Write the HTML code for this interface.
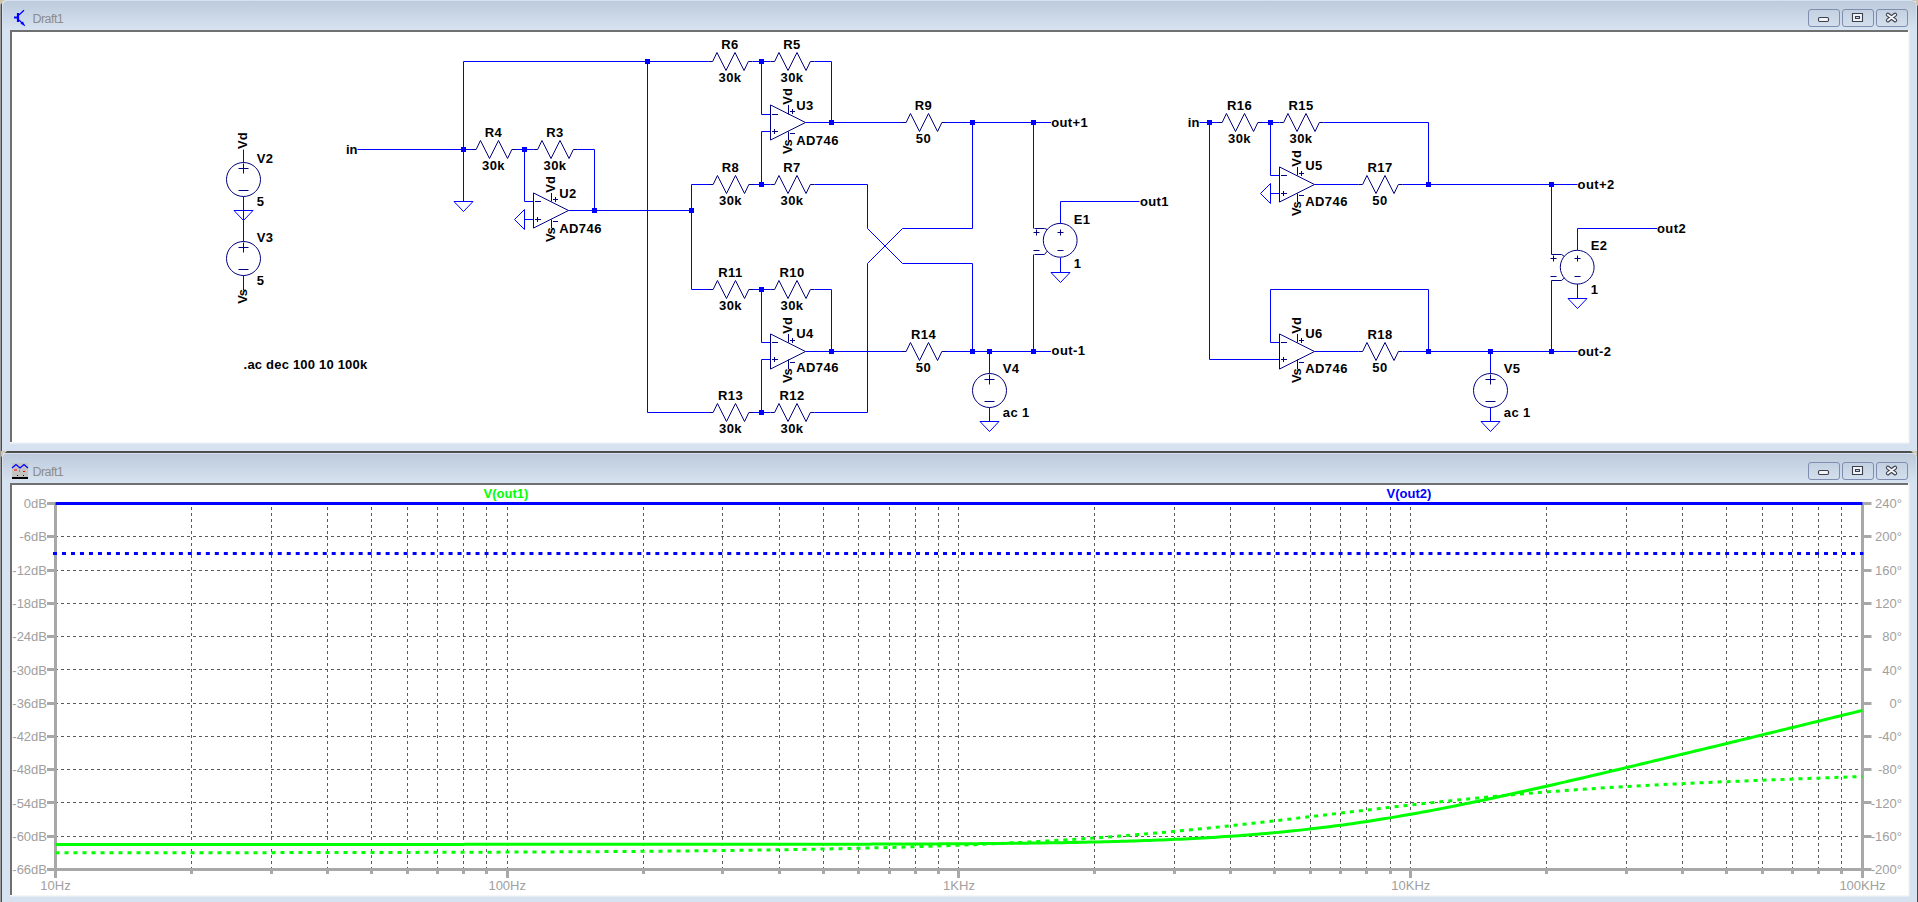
<!DOCTYPE html><html><head><meta charset="utf-8"><style>html,body{margin:0;padding:0;width:1918px;height:902px;overflow:hidden;background:#d6e2f0}svg{display:block}svg text{font-family:"Liberation Sans",sans-serif}</style></head><body><svg width="1918" height="902" viewBox="0 0 1918 902">
<defs><linearGradient id="tg" x1="0" y1="0" x2="0" y2="1"><stop offset="0" stop-color="#bccadb"/><stop offset="1" stop-color="#d7e3f0"/></linearGradient><linearGradient id="bg" x1="0" y1="0" x2="0" y2="1"><stop offset="0" stop-color="#c3d0e0"/><stop offset="1" stop-color="#d3dfec"/></linearGradient></defs>
<rect x="0" y="0" width="1918" height="902" fill="#d6e2f0"/>
<rect x="0" y="0" width="2" height="902" fill="#9c9c9c"/><rect x="1" y="0" width="1.5" height="902" fill="#4a4a4a"/>
<rect x="1917" y="0" width="1" height="902" fill="#4a4a4a"/><rect x="2.5" y="0" width="1" height="902" fill="#eaf0f7"/>
<rect x="0" y="0" width="1918" height="1" fill="#dfe4ee"/>
<rect x="2" y="0" width="1915" height="451" fill="#d6e2f0"/>
<rect x="3" y="1" width="1913" height="29" fill="url(#tg)"/>
<rect x="10" y="30" width="1899" height="2" fill="#707070"/>
<rect x="10" y="30" width="2" height="412" fill="#707070"/>
<rect x="12" y="32" width="1896" height="410" fill="#ffffff"/>
<rect x="10" y="442" width="1899" height="1.5" fill="#f6f6f6"/>
<rect x="1908" y="30" width="1.5" height="413" fill="#f6f6f6"/>
<text x="32.5" y="22.5" font-size="12.5" letter-spacing="-0.55" fill="#8c8c8c">Draft1</text>
<rect x="1808.5" y="9.5" width="31" height="17" rx="2.5" fill="url(#bg)" stroke="#7f8db0" stroke-width="1"/>
<rect x="1842.5" y="9.5" width="31" height="17" rx="2.5" fill="url(#bg)" stroke="#7f8db0" stroke-width="1"/>
<rect x="1876.5" y="9.5" width="31" height="17" rx="2.5" fill="url(#bg)" stroke="#7f8db0" stroke-width="1"/>
<rect x="1818.5" y="17.5" width="10" height="4" rx="1.2" fill="#f4f4f4" stroke="#3b4050" stroke-width="1.1"/>
<path d="M1852.5 13.5 h10 v8 h-10 z M1855.5 16.5 v2 h4 v-2 z" fill="#f4f4f4" fill-rule="evenodd" stroke="#3b4050" stroke-width="1.1"/>
<path d="M1887.9 14.7 L1895.1 20.3 M1895.1 14.7 L1887.9 20.3" stroke="#3b4050" stroke-width="4.2" stroke-linecap="round"/>
<path d="M1887.9 14.7 L1895.1 20.3 M1895.1 14.7 L1887.9 20.3" stroke="#f4f4f4" stroke-width="2" stroke-linecap="round"/>
<rect x="2" y="451" width="1916" height="2" fill="#4d4d4d"/>
<rect x="2" y="453" width="1915" height="449" fill="#d6e2f0"/>
<rect x="3" y="454" width="1913" height="29" fill="url(#tg)"/>
<rect x="10" y="483" width="1899" height="2" fill="#707070"/>
<rect x="10" y="483" width="2" height="412" fill="#707070"/>
<rect x="12" y="485" width="1896" height="410" fill="#ffffff"/>
<rect x="10" y="895" width="1899" height="1.5" fill="#f6f6f6"/>
<rect x="1908" y="483" width="1.5" height="413" fill="#f6f6f6"/>
<text x="32.5" y="475.5" font-size="12.5" letter-spacing="-0.55" fill="#8c8c8c">Draft1</text>
<rect x="1808.5" y="462.5" width="31" height="17" rx="2.5" fill="url(#bg)" stroke="#7f8db0" stroke-width="1"/>
<rect x="1842.5" y="462.5" width="31" height="17" rx="2.5" fill="url(#bg)" stroke="#7f8db0" stroke-width="1"/>
<rect x="1876.5" y="462.5" width="31" height="17" rx="2.5" fill="url(#bg)" stroke="#7f8db0" stroke-width="1"/>
<rect x="1818.5" y="470.5" width="10" height="4" rx="1.2" fill="#f4f4f4" stroke="#3b4050" stroke-width="1.1"/>
<path d="M1852.5 466.5 h10 v8 h-10 z M1855.5 469.5 v2 h4 v-2 z" fill="#f4f4f4" fill-rule="evenodd" stroke="#3b4050" stroke-width="1.1"/>
<path d="M1887.9 467.7 L1895.1 473.3 M1895.1 467.7 L1887.9 473.3" stroke="#3b4050" stroke-width="4.2" stroke-linecap="round"/>
<path d="M1887.9 467.7 L1895.1 473.3 M1895.1 467.7 L1887.9 473.3" stroke="#f4f4f4" stroke-width="2" stroke-linecap="round"/>
<path d="M1 451 H7 L1 457 Z" fill="#cfc6ad"/><path d="M1917 451 H1911 L1917 457 Z" fill="#cfc6ad"/>
<path d="M0 0 H5 L0 5 Z" fill="#cfc6ad"/><path d="M1918 0 H1912 L1918 6 Z" fill="#cfc6ad"/>
<path d="M3 458 Q3 453.5 7.5 453 L3 453 Z" fill="#d6e2f0"/><path d="M1916 458 Q1916 453.5 1911.5 453 L1916 453 Z" fill="#d6e2f0"/>
<path d="M3 6 Q3 1.5 7.5 1 L3 1 Z" fill="#d6e2f0"/><path d="M1916 6 Q1916 1.5 1911.5 1 L1916 1 Z" fill="#d6e2f0"/>
<g stroke="#0000ff" fill="none"><path d="M14 17.5 H18" stroke-width="2"/><path d="M18 13 V22" stroke-width="2.2"/><path d="M19 15 L24 10.2" stroke-width="1.2"/><path d="M19 20 L24.8 25.7" stroke-width="1.2"/><path d="M21 23.6 L23.5 24.5 L22.8 21.8 Z" fill="#0000ff" stroke-width="0.8"/></g>
<rect x="12" y="463" width="16" height="15" fill="#c3c3c3"/><path d="M12 468 L16 464.5 L20 468 L24 464.5 L28 468" stroke="#0000ff" stroke-width="1.2" fill="none"/><rect x="14" y="469.5" width="3" height="1" fill="#ff0000"/><rect x="19" y="470.5" width="1" height="1" fill="#ff0000"/><rect x="23" y="471" width="2" height="1" fill="#ff0000"/><rect x="17" y="475" width="1" height="1" fill="#0000a0"/><rect x="23" y="475" width="1" height="1" fill="#0000a0"/><rect x="12" y="477" width="16" height="2" fill="#000"/>
<g>
<path d="M243.5 149.5 L243.5 162.5" fill="none" stroke="#0000ff" stroke-width="1"/>
<path d="M243.5 196.5 L243.5 241.5" fill="none" stroke="#0000ff" stroke-width="1"/>
<path d="M243.5 275.5 L243.5 290" fill="none" stroke="#0000ff" stroke-width="1"/>
<path d="M234.0 210.5 H253.0 L243.5 220.5 Z" fill="none" stroke="#0000ff" stroke-width="1"/>
<circle cx="243.5" cy="179.5" r="17" fill="none" stroke="#000080" stroke-width="1"/>
<path d="M238.5 168.5 L248.5 168.5" fill="none" stroke="#000080" stroke-width="1"/>
<path d="M243.5 163.5 L243.5 173.5" fill="none" stroke="#000080" stroke-width="1"/>
<path d="M238.5 190.5 L248.5 190.5" fill="none" stroke="#000080" stroke-width="1"/>
<text x="256.8" y="163.1" text-anchor="start" font-size="13" font-weight="bold" fill="#000" letter-spacing="0.4">V2</text>
<text x="256.8" y="205.6" text-anchor="start" font-size="13" font-weight="bold" fill="#000" letter-spacing="0.4">5</text>
<circle cx="243.5" cy="258.5" r="17" fill="none" stroke="#000080" stroke-width="1"/>
<path d="M238.5 247.5 L248.5 247.5" fill="none" stroke="#000080" stroke-width="1"/>
<path d="M243.5 242.5 L243.5 252.5" fill="none" stroke="#000080" stroke-width="1"/>
<path d="M238.5 269.5 L248.5 269.5" fill="none" stroke="#000080" stroke-width="1"/>
<text x="256.8" y="242.0" text-anchor="start" font-size="13" font-weight="bold" fill="#000" letter-spacing="0.4">V3</text>
<text x="256.8" y="284.6" text-anchor="start" font-size="13" font-weight="bold" fill="#000" letter-spacing="0.4">5</text>
<text transform="translate(247.2 149) rotate(-90)" text-anchor="start" font-size="13" font-weight="bold" fill="#000">Vd</text>
<text transform="translate(247.2 290.3) rotate(-90)" text-anchor="end" font-size="13" font-weight="bold" fill="#000" letter-spacing="-1.2">Vs</text>
<text x="243.6" y="368.8" text-anchor="start" font-size="13" font-weight="bold" fill="#000" letter-spacing="0.2">.ac dec 100 10 100k</text>
<text x="357.5" y="153.7" text-anchor="end" font-size="13" font-weight="bold" fill="#000" letter-spacing="0">in</text>
<path d="M357.5 149.5 L472 149.5" fill="none" stroke="#0000ff" stroke-width="1"/>
<path d="M516 149.5 L533.5 149.5" fill="none" stroke="#0000ff" stroke-width="1"/>
<path d="M577.5 149.5 L594.5 149.5 L594.5 210.5" fill="none" stroke="#0000ff" stroke-width="1"/>
<path d="M472 149.5 L476.15 149.5 L480.45 140.5 L489.5 158.5 L498.5 140.5 L507.55 158.5 L511.85 149.5 L516 149.5" fill="none" stroke="#000080" stroke-width="1"/>
<text x="493.5" y="136.8" text-anchor="middle" font-size="13" font-weight="bold" fill="#000" letter-spacing="0.4">R4</text>
<text x="493.5" y="169.5" text-anchor="middle" font-size="13" font-weight="bold" fill="#000" letter-spacing="0.4">30k</text>
<path d="M533.5 149.5 L537.65 149.5 L541.95 140.5 L551.0 158.5 L560.0 140.5 L569.05 158.5 L573.35 149.5 L577.5 149.5" fill="none" stroke="#000080" stroke-width="1"/>
<text x="555.0" y="136.8" text-anchor="middle" font-size="13" font-weight="bold" fill="#000" letter-spacing="0.4">R3</text>
<text x="555.0" y="169.5" text-anchor="middle" font-size="13" font-weight="bold" fill="#000" letter-spacing="0.4">30k</text>
<path d="M463.5 201.5 L463.5 61.5 L708.5 61.5" fill="none" stroke="#0000ff" stroke-width="1"/>
<path d="M454.0 201.5 H473.0 L463.5 211.5 Z" fill="none" stroke="#0000ff" stroke-width="1"/>
<path d="M524.5 149.5 L524.5 201.5 L533.5 201.5" fill="none" stroke="#0000ff" stroke-width="1"/>
<path d="M524.5 219.5 L533.5 219.5" fill="none" stroke="#0000ff" stroke-width="1"/>
<path d="M524.5 209.5 V229.5 L514.5 219.5 Z" fill="none" stroke="#0000ff" stroke-width="1"/>
<path d="M533.5 192.95 L568.5 210.5 L533.5 228.05 L533.5 192.95" fill="none" stroke="#000080" stroke-width="1"/>
<path d="M551.5 192.95 L551.5 201.5" fill="none" stroke="#000080" stroke-width="1"/>
<path d="M551.5 228.05 L551.5 219.5" fill="none" stroke="#000080" stroke-width="1"/>
<path d="M535.0 201.5 L541.0 201.5" fill="none" stroke="#000080" stroke-width="1"/>
<path d="M535.0 219.5 L541.0 219.5" fill="none" stroke="#000080" stroke-width="1"/>
<path d="M537.5 217.0 L537.5 222.0" fill="none" stroke="#000080" stroke-width="1"/>
<path d="M553.0 199.5 L558.0 199.5" fill="none" stroke="#000080" stroke-width="1"/>
<path d="M555.5 197.0 L555.5 202.0" fill="none" stroke="#000080" stroke-width="1"/>
<path d="M553.0 221.5 L558.0 221.5" fill="none" stroke="#000080" stroke-width="1"/>
<text x="559.3" y="197.7" text-anchor="start" font-size="13" font-weight="bold" fill="#000" letter-spacing="0.4">U2</text>
<text x="559.3" y="232.6" text-anchor="start" font-size="13" font-weight="bold" fill="#000" letter-spacing="0.4">AD746</text>
<text transform="translate(555.3 192.64999999999998) rotate(-90)" text-anchor="start" font-size="13" font-weight="bold" fill="#000">Vd</text>
<text transform="translate(555.3 228.55) rotate(-90)" text-anchor="end" font-size="13" font-weight="bold" fill="#000" letter-spacing="-1.2">Vs</text>
<path d="M568.5 210.5 L691.5 210.5" fill="none" stroke="#0000ff" stroke-width="1"/>
<path d="M647.5 61.5 L647.5 412.5 L709 412.5" fill="none" stroke="#0000ff" stroke-width="1"/>
<path d="M708.5 61.5 L712.65 61.5 L716.95 52.5 L726.0 70.5 L735.0 52.5 L744.05 70.5 L748.35 61.5 L752.5 61.5" fill="none" stroke="#000080" stroke-width="1"/>
<text x="730.0" y="48.8" text-anchor="middle" font-size="13" font-weight="bold" fill="#000" letter-spacing="0.4">R6</text>
<text x="730.0" y="81.5" text-anchor="middle" font-size="13" font-weight="bold" fill="#000" letter-spacing="0.4">30k</text>
<path d="M770.5 61.5 L774.65 61.5 L778.95 52.5 L788.0 70.5 L797.0 52.5 L806.05 70.5 L810.35 61.5 L814.5 61.5" fill="none" stroke="#000080" stroke-width="1"/>
<text x="792.0" y="48.8" text-anchor="middle" font-size="13" font-weight="bold" fill="#000" letter-spacing="0.4">R5</text>
<text x="792.0" y="81.5" text-anchor="middle" font-size="13" font-weight="bold" fill="#000" letter-spacing="0.4">30k</text>
<path d="M752.5 61.5 L770.5 61.5" fill="none" stroke="#0000ff" stroke-width="1"/>
<path d="M814.5 61.5 L831.5 61.5 L831.5 122.5" fill="none" stroke="#0000ff" stroke-width="1"/>
<path d="M709 184.5 L691.5 184.5 L691.5 289.5 L709 289.5" fill="none" stroke="#0000ff" stroke-width="1"/>
<path d="M709 184.5 L713.15 184.5 L717.45 175.5 L726.5 193.5 L735.5 175.5 L744.55 193.5 L748.85 184.5 L753 184.5" fill="none" stroke="#000080" stroke-width="1"/>
<text x="730.5" y="171.8" text-anchor="middle" font-size="13" font-weight="bold" fill="#000" letter-spacing="0.4">R8</text>
<text x="730.5" y="204.5" text-anchor="middle" font-size="13" font-weight="bold" fill="#000" letter-spacing="0.4">30k</text>
<path d="M770.5 184.5 L774.65 184.5 L778.95 175.5 L788.0 193.5 L797.0 175.5 L806.05 193.5 L810.35 184.5 L814.5 184.5" fill="none" stroke="#000080" stroke-width="1"/>
<text x="792.0" y="171.8" text-anchor="middle" font-size="13" font-weight="bold" fill="#000" letter-spacing="0.4">R7</text>
<text x="792.0" y="204.5" text-anchor="middle" font-size="13" font-weight="bold" fill="#000" letter-spacing="0.4">30k</text>
<path d="M709 289.5 L713.15 289.5 L717.45 280.5 L726.5 298.5 L735.5 280.5 L744.55 298.5 L748.85 289.5 L753 289.5" fill="none" stroke="#000080" stroke-width="1"/>
<text x="730.5" y="276.8" text-anchor="middle" font-size="13" font-weight="bold" fill="#000" letter-spacing="0.4">R11</text>
<text x="730.5" y="309.5" text-anchor="middle" font-size="13" font-weight="bold" fill="#000" letter-spacing="0.4">30k</text>
<path d="M770.5 289.5 L774.65 289.5 L778.95 280.5 L788.0 298.5 L797.0 280.5 L806.05 298.5 L810.35 289.5 L814.5 289.5" fill="none" stroke="#000080" stroke-width="1"/>
<text x="792.0" y="276.8" text-anchor="middle" font-size="13" font-weight="bold" fill="#000" letter-spacing="0.4">R10</text>
<text x="792.0" y="309.5" text-anchor="middle" font-size="13" font-weight="bold" fill="#000" letter-spacing="0.4">30k</text>
<path d="M709 412.5 L713.15 412.5 L717.45 403.5 L726.5 421.5 L735.5 403.5 L744.55 421.5 L748.85 412.5 L753 412.5" fill="none" stroke="#000080" stroke-width="1"/>
<text x="730.5" y="399.8" text-anchor="middle" font-size="13" font-weight="bold" fill="#000" letter-spacing="0.4">R13</text>
<text x="730.5" y="432.5" text-anchor="middle" font-size="13" font-weight="bold" fill="#000" letter-spacing="0.4">30k</text>
<path d="M770.5 412.5 L774.65 412.5 L778.95 403.5 L788.0 421.5 L797.0 403.5 L806.05 421.5 L810.35 412.5 L814.5 412.5" fill="none" stroke="#000080" stroke-width="1"/>
<text x="792.0" y="399.8" text-anchor="middle" font-size="13" font-weight="bold" fill="#000" letter-spacing="0.4">R12</text>
<text x="792.0" y="432.5" text-anchor="middle" font-size="13" font-weight="bold" fill="#000" letter-spacing="0.4">30k</text>
<path d="M753 184.5 L770.5 184.5" fill="none" stroke="#0000ff" stroke-width="1"/>
<path d="M753 289.5 L770.5 289.5" fill="none" stroke="#0000ff" stroke-width="1"/>
<path d="M753 412.5 L770.5 412.5" fill="none" stroke="#0000ff" stroke-width="1"/>
<path d="M814.5 184.5 L867.5 184.5 L867.5 228.5 L902.5 263.5 L972.5 263.5 L972.5 351.5" fill="none" stroke="#0000ff" stroke-width="1"/>
<path d="M814.5 412.5 L867.5 412.5 L867.5 263.5 L902.5 228.5 L972.5 228.5 L972.5 122.5" fill="none" stroke="#0000ff" stroke-width="1"/>
<path d="M814.5 289.5 L831.5 289.5 L831.5 351.5" fill="none" stroke="#0000ff" stroke-width="1"/>
<path d="M761.5 61.5 L761.5 114.5 L770.5 114.5" fill="none" stroke="#0000ff" stroke-width="1"/>
<path d="M761.5 184.5 L761.5 131.5 L770.5 131.5" fill="none" stroke="#0000ff" stroke-width="1"/>
<path d="M761.5 289.5 L761.5 342.5 L770.5 342.5" fill="none" stroke="#0000ff" stroke-width="1"/>
<path d="M761.5 412.5 L761.5 359.5 L770.5 359.5" fill="none" stroke="#0000ff" stroke-width="1"/>
<path d="M770.5 104.95 L805.5 122.5 L770.5 140.05 L770.5 104.95" fill="none" stroke="#000080" stroke-width="1"/>
<path d="M788.5 104.95 L788.5 114.5" fill="none" stroke="#000080" stroke-width="1"/>
<path d="M788.5 140.05 L788.5 131.5" fill="none" stroke="#000080" stroke-width="1"/>
<path d="M772.0 114.5 L778.0 114.5" fill="none" stroke="#000080" stroke-width="1"/>
<path d="M772.0 131.5 L778.0 131.5" fill="none" stroke="#000080" stroke-width="1"/>
<path d="M774.5 129.0 L774.5 134.0" fill="none" stroke="#000080" stroke-width="1"/>
<path d="M790.0 111.5 L795.0 111.5" fill="none" stroke="#000080" stroke-width="1"/>
<path d="M792.5 109.0 L792.5 114.0" fill="none" stroke="#000080" stroke-width="1"/>
<path d="M790.0 133.5 L795.0 133.5" fill="none" stroke="#000080" stroke-width="1"/>
<text x="796.3" y="109.8" text-anchor="start" font-size="13" font-weight="bold" fill="#000" letter-spacing="0.4">U3</text>
<text x="796.3" y="144.7" text-anchor="start" font-size="13" font-weight="bold" fill="#000" letter-spacing="0.4">AD746</text>
<text transform="translate(792.3 104.65) rotate(-90)" text-anchor="start" font-size="13" font-weight="bold" fill="#000">Vd</text>
<text transform="translate(792.3 140.55) rotate(-90)" text-anchor="end" font-size="13" font-weight="bold" fill="#000" letter-spacing="-1.2">Vs</text>
<path d="M770.5 333.95 L805.5 351.5 L770.5 369.05 L770.5 333.95" fill="none" stroke="#000080" stroke-width="1"/>
<path d="M788.5 333.95 L788.5 342.5" fill="none" stroke="#000080" stroke-width="1"/>
<path d="M788.5 369.05 L788.5 359.5" fill="none" stroke="#000080" stroke-width="1"/>
<path d="M772.0 342.5 L778.0 342.5" fill="none" stroke="#000080" stroke-width="1"/>
<path d="M772.0 359.5 L778.0 359.5" fill="none" stroke="#000080" stroke-width="1"/>
<path d="M774.5 357.0 L774.5 362.0" fill="none" stroke="#000080" stroke-width="1"/>
<path d="M790.0 340.5 L795.0 340.5" fill="none" stroke="#000080" stroke-width="1"/>
<path d="M792.5 338.0 L792.5 343.0" fill="none" stroke="#000080" stroke-width="1"/>
<path d="M790.0 362.5 L795.0 362.5" fill="none" stroke="#000080" stroke-width="1"/>
<text x="796.3" y="337.5" text-anchor="start" font-size="13" font-weight="bold" fill="#000" letter-spacing="0.4">U4</text>
<text x="796.3" y="372.3" text-anchor="start" font-size="13" font-weight="bold" fill="#000" letter-spacing="0.4">AD746</text>
<text transform="translate(792.3 333.65) rotate(-90)" text-anchor="start" font-size="13" font-weight="bold" fill="#000">Vd</text>
<text transform="translate(792.3 369.55) rotate(-90)" text-anchor="end" font-size="13" font-weight="bold" fill="#000" letter-spacing="-1.2">Vs</text>
<path d="M805.5 122.5 L902 122.5" fill="none" stroke="#0000ff" stroke-width="1"/>
<path d="M946 122.5 L1051 122.5" fill="none" stroke="#0000ff" stroke-width="1"/>
<path d="M805.5 351.5 L902 351.5" fill="none" stroke="#0000ff" stroke-width="1"/>
<path d="M946 351.5 L1051 351.5" fill="none" stroke="#0000ff" stroke-width="1"/>
<path d="M902 122.5 L906.15 122.5 L910.45 113.5 L919.5 131.5 L928.5 113.5 L937.55 131.5 L941.85 122.5 L946 122.5" fill="none" stroke="#000080" stroke-width="1"/>
<text x="923.5" y="109.8" text-anchor="middle" font-size="13" font-weight="bold" fill="#000" letter-spacing="0.4">R9</text>
<text x="923.5" y="142.5" text-anchor="middle" font-size="13" font-weight="bold" fill="#000" letter-spacing="0.4">50</text>
<path d="M902 351.5 L906.15 351.5 L910.45 342.5 L919.5 360.5 L928.5 342.5 L937.55 360.5 L941.85 351.5 L946 351.5" fill="none" stroke="#000080" stroke-width="1"/>
<text x="923.5" y="338.8" text-anchor="middle" font-size="13" font-weight="bold" fill="#000" letter-spacing="0.4">R14</text>
<text x="923.5" y="371.5" text-anchor="middle" font-size="13" font-weight="bold" fill="#000" letter-spacing="0.4">50</text>
<path d="M1033.5 122.5 L1033.5 228.5" fill="none" stroke="#0000ff" stroke-width="1"/>
<path d="M1033.5 351.5 L1033.5 254.5" fill="none" stroke="#0000ff" stroke-width="1"/>
<circle cx="1060.2" cy="240.3" r="16.9" fill="none" stroke="#000080" stroke-width="1"/>
<path d="M1034.5 228.5 L1044.5 228.5 L1047.3 229.5" fill="none" stroke="#000080" stroke-width="1"/>
<path d="M1034.5 254.5 L1044.5 254.5 L1047.3 251.10000000000002" fill="none" stroke="#000080" stroke-width="1"/>
<path d="M1033.5 232.5 L1039.5 232.5" fill="none" stroke="#000080" stroke-width="1"/>
<path d="M1036.5 229.5 L1036.5 235.5" fill="none" stroke="#000080" stroke-width="1"/>
<path d="M1033.5 250.5 L1039.5 250.5" fill="none" stroke="#000080" stroke-width="1"/>
<path d="M1057.5 232.5 L1063.5 232.5" fill="none" stroke="#000080" stroke-width="1"/>
<path d="M1060.5 229.5 L1060.5 235.5" fill="none" stroke="#000080" stroke-width="1"/>
<path d="M1057.5 250.5 L1063.5 250.5" fill="none" stroke="#000080" stroke-width="1"/>
<text x="1073.7" y="224.0" text-anchor="start" font-size="13" font-weight="bold" fill="#000" letter-spacing="0.4">E1</text>
<text x="1073.7" y="267.5" text-anchor="start" font-size="13" font-weight="bold" fill="#000" letter-spacing="0.4">1</text>
<path d="M1060.5 223.5 L1060.5 201.5 L1139.5 201.5" fill="none" stroke="#0000ff" stroke-width="1"/>
<path d="M1060.5 257.5 L1060.5 272.5" fill="none" stroke="#0000ff" stroke-width="1"/>
<path d="M1051.0 272.5 H1070.0 L1060.5 282.5 Z" fill="none" stroke="#0000ff" stroke-width="1"/>
<text x="1051.2" y="126.6" text-anchor="start" font-size="13" font-weight="bold" fill="#000" letter-spacing="0.4">out+1</text>
<text x="1051.6" y="355.4" text-anchor="start" font-size="13" font-weight="bold" fill="#000" letter-spacing="0.4">out-1</text>
<text x="1139.9" y="205.8" text-anchor="start" font-size="13" font-weight="bold" fill="#000" letter-spacing="0.4">out1</text>
<path d="M989.5 351.5 L989.5 373.5" fill="none" stroke="#0000ff" stroke-width="1"/>
<path d="M989.5 407.5 L989.5 421.5" fill="none" stroke="#0000ff" stroke-width="1"/>
<path d="M980.0 421.5 H999.0 L989.5 431.5 Z" fill="none" stroke="#0000ff" stroke-width="1"/>
<circle cx="989.5" cy="390.5" r="17" fill="none" stroke="#000080" stroke-width="1"/>
<path d="M984.5 379.5 L994.5 379.5" fill="none" stroke="#000080" stroke-width="1"/>
<path d="M989.5 374.5 L989.5 384.5" fill="none" stroke="#000080" stroke-width="1"/>
<path d="M984.5 401.5 L994.5 401.5" fill="none" stroke="#000080" stroke-width="1"/>
<text x="1002.8" y="372.7" text-anchor="start" font-size="13" font-weight="bold" fill="#000" letter-spacing="0.4">V4</text>
<text x="1002.8" y="416.6" text-anchor="start" font-size="13" font-weight="bold" fill="#000" letter-spacing="0.4">ac 1</text>
<rect x="461.0" y="147.0" width="5" height="5" fill="#0000ff"/>
<rect x="522.0" y="147.0" width="5" height="5" fill="#0000ff"/>
<rect x="592.0" y="208.0" width="5" height="5" fill="#0000ff"/>
<rect x="645.0" y="59.0" width="5" height="5" fill="#0000ff"/>
<rect x="689.0" y="208.0" width="5" height="5" fill="#0000ff"/>
<rect x="759.0" y="59.0" width="5" height="5" fill="#0000ff"/>
<rect x="829.0" y="120.0" width="5" height="5" fill="#0000ff"/>
<rect x="759.0" y="182.0" width="5" height="5" fill="#0000ff"/>
<rect x="759.0" y="287.0" width="5" height="5" fill="#0000ff"/>
<rect x="759.0" y="410.0" width="5" height="5" fill="#0000ff"/>
<rect x="829.0" y="349.0" width="5" height="5" fill="#0000ff"/>
<rect x="970.0" y="120.0" width="5" height="5" fill="#0000ff"/>
<rect x="1031.0" y="120.0" width="5" height="5" fill="#0000ff"/>
<rect x="970.0" y="349.0" width="5" height="5" fill="#0000ff"/>
<rect x="987.0" y="349.0" width="5" height="5" fill="#0000ff"/>
<rect x="1031.0" y="349.0" width="5" height="5" fill="#0000ff"/>
<text x="1199.4" y="126.5" text-anchor="end" font-size="13" font-weight="bold" fill="#000" letter-spacing="0">in</text>
<path d="M1199.5 122.5 L1218 122.5" fill="none" stroke="#0000ff" stroke-width="1"/>
<path d="M1209.5 122.5 L1209.5 359.5 L1279.5 359.5" fill="none" stroke="#0000ff" stroke-width="1"/>
<path d="M1218 122.5 L1222.15 122.5 L1226.45 113.5 L1235.5 131.5 L1244.5 113.5 L1253.55 131.5 L1257.85 122.5 L1262 122.5" fill="none" stroke="#000080" stroke-width="1"/>
<text x="1239.5" y="109.8" text-anchor="middle" font-size="13" font-weight="bold" fill="#000" letter-spacing="0.4">R16</text>
<text x="1239.5" y="142.5" text-anchor="middle" font-size="13" font-weight="bold" fill="#000" letter-spacing="0.4">30k</text>
<path d="M1279.5 122.5 L1283.65 122.5 L1287.95 113.5 L1297.0 131.5 L1306.0 113.5 L1315.05 131.5 L1319.35 122.5 L1323.5 122.5" fill="none" stroke="#000080" stroke-width="1"/>
<text x="1301.0" y="109.8" text-anchor="middle" font-size="13" font-weight="bold" fill="#000" letter-spacing="0.4">R15</text>
<text x="1301.0" y="142.5" text-anchor="middle" font-size="13" font-weight="bold" fill="#000" letter-spacing="0.4">30k</text>
<path d="M1262 122.5 L1279.5 122.5" fill="none" stroke="#0000ff" stroke-width="1"/>
<path d="M1323.5 122.5 L1428.5 122.5 L1428.5 184.5" fill="none" stroke="#0000ff" stroke-width="1"/>
<path d="M1270.5 122.5 L1270.5 175.5 L1279.5 175.5" fill="none" stroke="#0000ff" stroke-width="1"/>
<path d="M1270.5 193.5 L1279.5 193.5" fill="none" stroke="#0000ff" stroke-width="1"/>
<path d="M1270.5 183.5 V203.5 L1260.5 193.5 Z" fill="none" stroke="#0000ff" stroke-width="1"/>
<path d="M1279.5 166.95 L1314.5 184.5 L1279.5 202.05 L1279.5 166.95" fill="none" stroke="#000080" stroke-width="1"/>
<path d="M1297.5 166.95 L1297.5 175.5" fill="none" stroke="#000080" stroke-width="1"/>
<path d="M1297.5 202.05 L1297.5 193.5" fill="none" stroke="#000080" stroke-width="1"/>
<path d="M1281.0 175.5 L1287.0 175.5" fill="none" stroke="#000080" stroke-width="1"/>
<path d="M1281.0 193.5 L1287.0 193.5" fill="none" stroke="#000080" stroke-width="1"/>
<path d="M1283.5 191.0 L1283.5 196.0" fill="none" stroke="#000080" stroke-width="1"/>
<path d="M1299.0 173.5 L1304.0 173.5" fill="none" stroke="#000080" stroke-width="1"/>
<path d="M1301.5 171.0 L1301.5 176.0" fill="none" stroke="#000080" stroke-width="1"/>
<path d="M1299.0 195.5 L1304.0 195.5" fill="none" stroke="#000080" stroke-width="1"/>
<text x="1305.3" y="170.4" text-anchor="start" font-size="13" font-weight="bold" fill="#000" letter-spacing="0.4">U5</text>
<text x="1305.3" y="205.6" text-anchor="start" font-size="13" font-weight="bold" fill="#000" letter-spacing="0.4">AD746</text>
<text transform="translate(1301.3 166.64999999999998) rotate(-90)" text-anchor="start" font-size="13" font-weight="bold" fill="#000">Vd</text>
<text transform="translate(1301.3 202.55) rotate(-90)" text-anchor="end" font-size="13" font-weight="bold" fill="#000" letter-spacing="-1.2">Vs</text>
<path d="M1279.5 333.95 L1314.5 351.5 L1279.5 369.05 L1279.5 333.95" fill="none" stroke="#000080" stroke-width="1"/>
<path d="M1297.5 333.95 L1297.5 342.5" fill="none" stroke="#000080" stroke-width="1"/>
<path d="M1297.5 369.05 L1297.5 359.5" fill="none" stroke="#000080" stroke-width="1"/>
<path d="M1281.0 342.5 L1287.0 342.5" fill="none" stroke="#000080" stroke-width="1"/>
<path d="M1281.0 359.5 L1287.0 359.5" fill="none" stroke="#000080" stroke-width="1"/>
<path d="M1283.5 357.0 L1283.5 362.0" fill="none" stroke="#000080" stroke-width="1"/>
<path d="M1299.0 340.5 L1304.0 340.5" fill="none" stroke="#000080" stroke-width="1"/>
<path d="M1301.5 338.0 L1301.5 343.0" fill="none" stroke="#000080" stroke-width="1"/>
<path d="M1299.0 362.5 L1304.0 362.5" fill="none" stroke="#000080" stroke-width="1"/>
<text x="1305.3" y="337.6" text-anchor="start" font-size="13" font-weight="bold" fill="#000" letter-spacing="0.4">U6</text>
<text x="1305.3" y="372.6" text-anchor="start" font-size="13" font-weight="bold" fill="#000" letter-spacing="0.4">AD746</text>
<text transform="translate(1301.3 333.65) rotate(-90)" text-anchor="start" font-size="13" font-weight="bold" fill="#000">Vd</text>
<text transform="translate(1301.3 369.55) rotate(-90)" text-anchor="end" font-size="13" font-weight="bold" fill="#000" letter-spacing="-1.2">Vs</text>
<path d="M1314.5 184.5 L1358.5 184.5" fill="none" stroke="#0000ff" stroke-width="1"/>
<path d="M1402.5 184.5 L1577.5 184.5" fill="none" stroke="#0000ff" stroke-width="1"/>
<path d="M1358.5 184.5 L1362.65 184.5 L1366.95 175.5 L1376.0 193.5 L1385.0 175.5 L1394.05 193.5 L1398.35 184.5 L1402.5 184.5" fill="none" stroke="#000080" stroke-width="1"/>
<text x="1380.0" y="171.8" text-anchor="middle" font-size="13" font-weight="bold" fill="#000" letter-spacing="0.4">R17</text>
<text x="1380.0" y="204.5" text-anchor="middle" font-size="13" font-weight="bold" fill="#000" letter-spacing="0.4">50</text>
<path d="M1358.5 351.5 L1362.65 351.5 L1366.95 342.5 L1376.0 360.5 L1385.0 342.5 L1394.05 360.5 L1398.35 351.5 L1402.5 351.5" fill="none" stroke="#000080" stroke-width="1"/>
<text x="1380.0" y="338.8" text-anchor="middle" font-size="13" font-weight="bold" fill="#000" letter-spacing="0.4">R18</text>
<text x="1380.0" y="371.5" text-anchor="middle" font-size="13" font-weight="bold" fill="#000" letter-spacing="0.4">50</text>
<path d="M1279.5 342.5 L1270.5 342.5 L1270.5 289.5 L1428.5 289.5 L1428.5 351.5" fill="none" stroke="#0000ff" stroke-width="1"/>
<path d="M1314.5 351.5 L1358.5 351.5" fill="none" stroke="#0000ff" stroke-width="1"/>
<path d="M1402.5 351.5 L1577.5 351.5" fill="none" stroke="#0000ff" stroke-width="1"/>
<path d="M1551.5 184.5 L1551.5 254.5" fill="none" stroke="#0000ff" stroke-width="1"/>
<path d="M1551.5 351.5 L1551.5 280.5" fill="none" stroke="#0000ff" stroke-width="1"/>
<circle cx="1577.2" cy="267.2" r="16.9" fill="none" stroke="#000080" stroke-width="1"/>
<path d="M1551.5 254.5 L1561.5 254.5 L1564.3 256.4" fill="none" stroke="#000080" stroke-width="1"/>
<path d="M1551.5 280.5 L1561.5 280.5 L1564.3 278.0" fill="none" stroke="#000080" stroke-width="1"/>
<path d="M1550.5 258.5 L1556.5 258.5" fill="none" stroke="#000080" stroke-width="1"/>
<path d="M1553.5 255.5 L1553.5 261.5" fill="none" stroke="#000080" stroke-width="1"/>
<path d="M1550.5 276.5 L1556.5 276.5" fill="none" stroke="#000080" stroke-width="1"/>
<path d="M1574.5 258.5 L1580.5 258.5" fill="none" stroke="#000080" stroke-width="1"/>
<path d="M1577.5 255.5 L1577.5 261.5" fill="none" stroke="#000080" stroke-width="1"/>
<path d="M1574.5 276.5 L1580.5 276.5" fill="none" stroke="#000080" stroke-width="1"/>
<text x="1590.7" y="250.0" text-anchor="start" font-size="13" font-weight="bold" fill="#000" letter-spacing="0.4">E2</text>
<text x="1590.7" y="293.5" text-anchor="start" font-size="13" font-weight="bold" fill="#000" letter-spacing="0.4">1</text>
<path d="M1577.5 250 L1577.5 228.5 L1657 228.5" fill="none" stroke="#0000ff" stroke-width="1"/>
<path d="M1577.5 284 L1577.5 298.5" fill="none" stroke="#0000ff" stroke-width="1"/>
<path d="M1568.0 298.5 H1587.0 L1577.5 308.5 Z" fill="none" stroke="#0000ff" stroke-width="1"/>
<path d="M1490.5 351.5 L1490.5 373.5" fill="none" stroke="#0000ff" stroke-width="1"/>
<path d="M1490.5 407.5 L1490.5 421.5" fill="none" stroke="#0000ff" stroke-width="1"/>
<path d="M1481.0 421.5 H1500.0 L1490.5 431.5 Z" fill="none" stroke="#0000ff" stroke-width="1"/>
<circle cx="1490.5" cy="390.5" r="17" fill="none" stroke="#000080" stroke-width="1"/>
<path d="M1485.5 379.5 L1495.5 379.5" fill="none" stroke="#000080" stroke-width="1"/>
<path d="M1490.5 374.5 L1490.5 384.5" fill="none" stroke="#000080" stroke-width="1"/>
<path d="M1485.5 401.5 L1495.5 401.5" fill="none" stroke="#000080" stroke-width="1"/>
<text x="1503.8" y="372.7" text-anchor="start" font-size="13" font-weight="bold" fill="#000" letter-spacing="0.4">V5</text>
<text x="1503.8" y="416.6" text-anchor="start" font-size="13" font-weight="bold" fill="#000" letter-spacing="0.4">ac 1</text>
<text x="1577.6" y="188.5" text-anchor="start" font-size="13" font-weight="bold" fill="#000" letter-spacing="0.4">out+2</text>
<text x="1577.7" y="355.7" text-anchor="start" font-size="13" font-weight="bold" fill="#000" letter-spacing="0.4">out-2</text>
<text x="1657" y="232.9" text-anchor="start" font-size="13" font-weight="bold" fill="#000" letter-spacing="0.4">out2</text>
<rect x="1207.0" y="120.0" width="5" height="5" fill="#0000ff"/>
<rect x="1268.0" y="120.0" width="5" height="5" fill="#0000ff"/>
<rect x="1426.0" y="182.0" width="5" height="5" fill="#0000ff"/>
<rect x="1549.0" y="182.0" width="5" height="5" fill="#0000ff"/>
<rect x="1426.0" y="349.0" width="5" height="5" fill="#0000ff"/>
<rect x="1488.0" y="349.0" width="5" height="5" fill="#0000ff"/>
<rect x="1549.0" y="349.0" width="5" height="5" fill="#0000ff"/>
</g>
<g>
<path d="M191.5 507 V868.0 M271.5 507 V868.0 M327.5 507 V868.0 M371.5 507 V868.0 M407.5 507 V868.0 M437.5 507 V868.0 M463.5 507 V868.0 M486.5 507 V868.0 M507.5 507 V868.0 M643.5 507 V868.0 M722.5 507 V868.0 M779.5 507 V868.0 M823.5 507 V868.0 M858.5 507 V868.0 M889.5 507 V868.0 M915.5 507 V868.0 M938.5 507 V868.0 M958.5 507 V868.0 M1094.5 507 V868.0 M1174.5 507 V868.0 M1230.5 507 V868.0 M1274.5 507 V868.0 M1310.5 507 V868.0 M1340.5 507 V868.0 M1366.5 507 V868.0 M1390.5 507 V868.0 M1410.5 507 V868.0 M1546.5 507 V868.0 M1626.5 507 V868.0 M1682.5 507 V868.0 M1726.5 507 V868.0 M1762.5 507 V868.0 M1792.5 507 V868.0 M1818.5 507 V868.0 M1841.5 507 V868.0 M55 536.5 H1861.0 M55 570.5 H1861.0 M55 603.5 H1861.0 M55 636.5 H1861.0 M55 669.5 H1861.0 M55 703.5 H1861.0 M55 736.5 H1861.0 M55 769.5 H1861.0 M55 802.5 H1861.0 M55 836.5 H1861.0" stroke="#5a5a5a" stroke-width="1" stroke-dasharray="3 3" fill="none"/>
<path d="M55.5 503.5 V869.5 H1862.5 V503.5" stroke="#a8a8a8" stroke-width="3" fill="none"/>
<path d="M47 503.5 H55.5 M1862.5 503.5 H1871.5 M47 536.5 H55.5 M1862.5 536.5 H1871.5 M47 570.5 H55.5 M1862.5 570.5 H1871.5 M47 603.5 H55.5 M1862.5 603.5 H1871.5 M47 636.5 H55.5 M1862.5 636.5 H1871.5 M47 669.5 H55.5 M1862.5 669.5 H1871.5 M47 703.5 H55.5 M1862.5 703.5 H1871.5 M47 736.5 H55.5 M1862.5 736.5 H1871.5 M47 769.5 H55.5 M1862.5 769.5 H1871.5 M47 802.5 H55.5 M1862.5 802.5 H1871.5 M47 836.5 H55.5 M1862.5 836.5 H1871.5 M47 869.5 H55.5 M1862.5 869.5 H1871.5 M55.5 869.5 V878 M191.5 869.5 V874 M271.5 869.5 V874 M327.5 869.5 V874 M371.5 869.5 V874 M407.5 869.5 V874 M437.5 869.5 V874 M463.5 869.5 V874 M486.5 869.5 V874 M507.5 869.5 V878 M643.5 869.5 V874 M722.5 869.5 V874 M779.5 869.5 V874 M823.5 869.5 V874 M858.5 869.5 V874 M889.5 869.5 V874 M915.5 869.5 V874 M938.5 869.5 V874 M958.5 869.5 V878 M1094.5 869.5 V874 M1174.5 869.5 V874 M1230.5 869.5 V874 M1274.5 869.5 V874 M1310.5 869.5 V874 M1340.5 869.5 V874 M1366.5 869.5 V874 M1390.5 869.5 V874 M1410.5 869.5 V878 M1546.5 869.5 V874 M1626.5 869.5 V874 M1682.5 869.5 V874 M1726.5 869.5 V874 M1762.5 869.5 V874 M1792.5 869.5 V874 M1818.5 869.5 V874 M1841.5 869.5 V874 M1862.5 869.5 V878" stroke="#a8a8a8" stroke-width="3" fill="none"/>
<text x="47" y="508.1" text-anchor="end" font-size="13" font-weight="normal" fill="#a0a0a0" >0dB</text>
<text x="1902" y="508.1" text-anchor="end" font-size="13" font-weight="normal" fill="#a0a0a0" >240°</text>
<text x="47" y="541.4" text-anchor="end" font-size="13" font-weight="normal" fill="#a0a0a0" >-6dB</text>
<text x="1902" y="541.4" text-anchor="end" font-size="13" font-weight="normal" fill="#a0a0a0" >200°</text>
<text x="47" y="574.6" text-anchor="end" font-size="13" font-weight="normal" fill="#a0a0a0" >-12dB</text>
<text x="1902" y="574.6" text-anchor="end" font-size="13" font-weight="normal" fill="#a0a0a0" >160°</text>
<text x="47" y="607.9" text-anchor="end" font-size="13" font-weight="normal" fill="#a0a0a0" >-18dB</text>
<text x="1902" y="607.9" text-anchor="end" font-size="13" font-weight="normal" fill="#a0a0a0" >120°</text>
<text x="47" y="641.2" text-anchor="end" font-size="13" font-weight="normal" fill="#a0a0a0" >-24dB</text>
<text x="1902" y="641.2" text-anchor="end" font-size="13" font-weight="normal" fill="#a0a0a0" >80°</text>
<text x="47" y="674.5" text-anchor="end" font-size="13" font-weight="normal" fill="#a0a0a0" >-30dB</text>
<text x="1902" y="674.5" text-anchor="end" font-size="13" font-weight="normal" fill="#a0a0a0" >40°</text>
<text x="47" y="707.7" text-anchor="end" font-size="13" font-weight="normal" fill="#a0a0a0" >-36dB</text>
<text x="1902" y="707.7" text-anchor="end" font-size="13" font-weight="normal" fill="#a0a0a0" >0°</text>
<text x="47" y="741.0" text-anchor="end" font-size="13" font-weight="normal" fill="#a0a0a0" >-42dB</text>
<text x="1902" y="741.0" text-anchor="end" font-size="13" font-weight="normal" fill="#a0a0a0" >-40°</text>
<text x="47" y="774.3" text-anchor="end" font-size="13" font-weight="normal" fill="#a0a0a0" >-48dB</text>
<text x="1902" y="774.3" text-anchor="end" font-size="13" font-weight="normal" fill="#a0a0a0" >-80°</text>
<text x="47" y="807.6" text-anchor="end" font-size="13" font-weight="normal" fill="#a0a0a0" >-54dB</text>
<text x="1902" y="807.6" text-anchor="end" font-size="13" font-weight="normal" fill="#a0a0a0" >-120°</text>
<text x="47" y="840.8" text-anchor="end" font-size="13" font-weight="normal" fill="#a0a0a0" >-60dB</text>
<text x="1902" y="840.8" text-anchor="end" font-size="13" font-weight="normal" fill="#a0a0a0" >-160°</text>
<text x="47" y="874.1" text-anchor="end" font-size="13" font-weight="normal" fill="#a0a0a0" >-66dB</text>
<text x="1902" y="874.1" text-anchor="end" font-size="13" font-weight="normal" fill="#a0a0a0" >-200°</text>
<text x="55.5" y="890" text-anchor="middle" font-size="13" font-weight="normal" fill="#a0a0a0" >10Hz</text>
<text x="507.2" y="890" text-anchor="middle" font-size="13" font-weight="normal" fill="#a0a0a0" >100Hz</text>
<text x="959.0" y="890" text-anchor="middle" font-size="13" font-weight="normal" fill="#a0a0a0" >1KHz</text>
<text x="1410.8" y="890" text-anchor="middle" font-size="13" font-weight="normal" fill="#a0a0a0" >10KHz</text>
<text x="1862.5" y="890" text-anchor="middle" font-size="13" font-weight="normal" fill="#a0a0a0" >100KHz</text>
<path d="M55.5 503.5 H1862.5" stroke="#0000ff" stroke-width="3" fill="none"/>
<path d="M53 553.5 H1863.5" stroke="#0000ff" stroke-width="3" stroke-dasharray="4 4.99" fill="none"/>
<path d="M55.5 844.38 L60.02 844.38 L64.54 844.38 L69.05 844.38 L73.57 844.38 L78.09 844.38 L82.61 844.38 L87.12 844.38 L91.64 844.38 L96.16 844.38 L100.68 844.38 L105.19 844.38 L109.71 844.38 L114.23 844.38 L118.75 844.38 L123.26 844.38 L127.78 844.38 L132.3 844.38 L136.81 844.38 L141.33 844.38 L145.85 844.38 L150.37 844.38 L154.88 844.38 L159.4 844.38 L163.92 844.38 L168.44 844.38 L172.95 844.38 L177.47 844.38 L181.99 844.38 L186.51 844.38 L191.03 844.38 L195.54 844.38 L200.06 844.38 L204.58 844.38 L209.1 844.38 L213.61 844.38 L218.13 844.38 L222.65 844.38 L227.16 844.38 L231.68 844.38 L236.2 844.38 L240.72 844.38 L245.23 844.38 L249.75 844.38 L254.27 844.38 L258.79 844.38 L263.3 844.38 L267.82 844.38 L272.34 844.38 L276.86 844.38 L281.38 844.38 L285.89 844.38 L290.41 844.38 L294.93 844.38 L299.45 844.38 L303.96 844.38 L308.48 844.38 L313.0 844.38 L317.52 844.38 L322.03 844.38 L326.55 844.38 L331.07 844.38 L335.59 844.38 L340.1 844.38 L344.62 844.38 L349.14 844.38 L353.66 844.38 L358.17 844.38 L362.69 844.38 L367.21 844.38 L371.72 844.38 L376.24 844.38 L380.76 844.38 L385.28 844.38 L389.8 844.38 L394.31 844.38 L398.83 844.38 L403.35 844.38 L407.87 844.38 L412.38 844.38 L416.9 844.38 L421.42 844.38 L425.93 844.38 L430.45 844.38 L434.97 844.38 L439.49 844.38 L444.0 844.38 L448.52 844.38 L453.04 844.38 L457.56 844.38 L462.07 844.38 L466.59 844.37 L471.11 844.37 L475.63 844.37 L480.14 844.37 L484.66 844.37 L489.18 844.37 L493.7 844.37 L498.21 844.37 L502.73 844.37 L507.25 844.37 L511.77 844.37 L516.29 844.37 L520.8 844.37 L525.32 844.37 L529.84 844.37 L534.36 844.37 L538.87 844.37 L543.39 844.37 L547.91 844.37 L552.43 844.37 L556.94 844.37 L561.46 844.37 L565.98 844.37 L570.49 844.37 L575.01 844.37 L579.53 844.37 L584.05 844.37 L588.56 844.36 L593.08 844.36 L597.6 844.36 L602.12 844.36 L606.63 844.36 L611.15 844.36 L615.67 844.36 L620.19 844.36 L624.7 844.36 L629.22 844.36 L633.74 844.36 L638.26 844.36 L642.77 844.35 L647.29 844.35 L651.81 844.35 L656.33 844.35 L660.84 844.35 L665.36 844.35 L669.88 844.35 L674.4 844.34 L678.91 844.34 L683.43 844.34 L687.95 844.34 L692.47 844.34 L696.99 844.34 L701.5 844.33 L706.02 844.33 L710.54 844.33 L715.05 844.33 L719.57 844.32 L724.09 844.32 L728.61 844.32 L733.12 844.32 L737.64 844.31 L742.16 844.31 L746.68 844.31 L751.2 844.3 L755.71 844.3 L760.23 844.3 L764.75 844.29 L769.26 844.29 L773.78 844.28 L778.3 844.28 L782.82 844.28 L787.34 844.27 L791.85 844.27 L796.37 844.26 L800.89 844.25 L805.41 844.25 L809.92 844.24 L814.44 844.24 L818.96 844.23 L823.48 844.22 L827.99 844.22 L832.51 844.21 L837.03 844.2 L841.55 844.19 L846.06 844.18 L850.58 844.17 L855.1 844.16 L859.62 844.15 L864.13 844.14 L868.65 844.13 L873.17 844.12 L877.69 844.11 L882.2 844.1 L886.72 844.08 L891.24 844.07 L895.76 844.05 L900.27 844.04 L904.79 844.02 L909.31 844.01 L913.82 843.99 L918.34 843.97 L922.86 843.95 L927.38 843.93 L931.89 843.91 L936.41 843.89 L940.93 843.86 L945.45 843.84 L949.97 843.82 L954.48 843.79 L959.0 843.76 L963.52 843.73 L968.03 843.7 L972.55 843.67 L977.07 843.64 L981.59 843.61 L986.11 843.57 L990.62 843.53 L995.14 843.49 L999.66 843.45 L1004.18 843.41 L1008.69 843.36 L1013.21 843.32 L1017.73 843.27 L1022.25 843.22 L1026.76 843.17 L1031.28 843.11 L1035.8 843.05 L1040.32 842.99 L1044.83 842.93 L1049.35 842.86 L1053.87 842.79 L1058.39 842.72 L1062.9 842.65 L1067.42 842.57 L1071.94 842.49 L1076.45 842.4 L1080.97 842.31 L1085.49 842.22 L1090.01 842.12 L1094.52 842.02 L1099.04 841.92 L1103.56 841.81 L1108.08 841.7 L1112.6 841.58 L1117.11 841.46 L1121.63 841.33 L1126.15 841.2 L1130.66 841.06 L1135.18 840.91 L1139.7 840.76 L1144.22 840.61 L1148.73 840.45 L1153.25 840.28 L1157.77 840.1 L1162.29 839.92 L1166.81 839.74 L1171.32 839.54 L1175.84 839.34 L1180.36 839.13 L1184.88 838.91 L1189.39 838.69 L1193.91 838.45 L1198.43 838.21 L1202.94 837.96 L1207.46 837.7 L1211.98 837.44 L1216.5 837.16 L1221.02 836.87 L1225.53 836.58 L1230.05 836.27 L1234.57 835.95 L1239.09 835.63 L1243.6 835.29 L1248.12 834.94 L1252.64 834.59 L1257.15 834.22 L1261.67 833.84 L1266.19 833.44 L1270.71 833.04 L1275.23 832.63 L1279.74 832.2 L1284.26 831.76 L1288.78 831.31 L1293.3 830.84 L1297.81 830.37 L1302.33 829.88 L1306.85 829.38 L1311.37 828.86 L1315.88 828.33 L1320.4 827.79 L1324.92 827.24 L1329.43 826.67 L1333.95 826.09 L1338.47 825.5 L1342.99 824.89 L1347.5 824.27 L1352.02 823.64 L1356.54 823.0 L1361.06 822.34 L1365.58 821.67 L1370.09 820.98 L1374.61 820.28 L1379.13 819.57 L1383.64 818.85 L1388.16 818.12 L1392.68 817.37 L1397.2 816.61 L1401.71 815.84 L1406.23 815.06 L1410.75 814.26 L1415.27 813.45 L1419.78 812.64 L1424.3 811.81 L1428.82 810.97 L1433.34 810.12 L1437.86 809.26 L1442.37 808.39 L1446.89 807.51 L1451.41 806.62 L1455.92 805.72 L1460.44 804.82 L1464.96 803.9 L1469.48 802.98 L1474.0 802.04 L1478.51 801.1 L1483.03 800.16 L1487.55 799.2 L1492.06 798.24 L1496.58 797.27 L1501.1 796.3 L1505.62 795.31 L1510.14 794.33 L1514.65 793.33 L1519.17 792.34 L1523.69 791.33 L1528.2 790.33 L1532.72 789.31 L1537.24 788.3 L1541.76 787.27 L1546.27 786.25 L1550.79 785.22 L1555.31 784.18 L1559.83 783.15 L1564.35 782.11 L1568.86 781.07 L1573.38 780.02 L1577.9 778.97 L1582.41 777.92 L1586.93 776.86 L1591.45 775.81 L1595.97 774.75 L1600.48 773.69 L1605.0 772.63 L1609.52 771.56 L1614.04 770.49 L1618.56 769.43 L1623.07 768.36 L1627.59 767.28 L1632.11 766.21 L1636.62 765.14 L1641.14 764.06 L1645.66 762.98 L1650.18 761.9 L1654.69 760.82 L1659.21 759.74 L1663.73 758.66 L1668.25 757.58 L1672.77 756.49 L1677.28 755.41 L1681.8 754.32 L1686.32 753.24 L1690.84 752.15 L1695.35 751.06 L1699.87 749.97 L1704.39 748.88 L1708.9 747.79 L1713.42 746.7 L1717.94 745.61 L1722.46 744.51 L1726.98 743.42 L1731.49 742.33 L1736.01 741.23 L1740.53 740.14 L1745.05 739.04 L1749.56 737.94 L1754.08 736.85 L1758.6 735.75 L1763.11 734.65 L1767.63 733.55 L1772.15 732.45 L1776.67 731.35 L1781.19 730.26 L1785.7 729.16 L1790.22 728.05 L1794.74 726.95 L1799.25 725.85 L1803.77 724.75 L1808.29 723.65 L1812.81 722.55 L1817.33 721.45 L1821.84 720.34 L1826.36 719.24 L1830.88 718.14 L1835.39 717.03 L1839.91 715.93 L1844.43 714.83 L1848.95 713.72 L1853.47 712.62 L1857.98 711.51 L1862.5 710.41" stroke="#00ff00" stroke-width="3" fill="none" stroke-linejoin="round"/>
<path d="M55.5 852.79 L60.02 852.78 L64.54 852.78 L69.05 852.78 L73.57 852.78 L78.09 852.78 L82.61 852.77 L87.12 852.77 L91.64 852.77 L96.16 852.77 L100.68 852.77 L105.19 852.76 L109.71 852.76 L114.23 852.76 L118.75 852.76 L123.26 852.75 L127.78 852.75 L132.3 852.75 L136.81 852.75 L141.33 852.74 L145.85 852.74 L150.37 852.74 L154.88 852.74 L159.4 852.73 L163.92 852.73 L168.44 852.73 L172.95 852.72 L177.47 852.72 L181.99 852.72 L186.51 852.71 L191.03 852.71 L195.54 852.71 L200.06 852.7 L204.58 852.7 L209.1 852.69 L213.61 852.69 L218.13 852.69 L222.65 852.68 L227.16 852.68 L231.68 852.67 L236.2 852.67 L240.72 852.67 L245.23 852.66 L249.75 852.66 L254.27 852.65 L258.79 852.65 L263.3 852.64 L267.82 852.64 L272.34 852.63 L276.86 852.62 L281.38 852.62 L285.89 852.61 L290.41 852.61 L294.93 852.6 L299.45 852.6 L303.96 852.59 L308.48 852.58 L313.0 852.58 L317.52 852.57 L322.03 852.56 L326.55 852.56 L331.07 852.55 L335.59 852.54 L340.1 852.53 L344.62 852.53 L349.14 852.52 L353.66 852.51 L358.17 852.5 L362.69 852.49 L367.21 852.49 L371.72 852.48 L376.24 852.47 L380.76 852.46 L385.28 852.45 L389.8 852.44 L394.31 852.43 L398.83 852.42 L403.35 852.41 L407.87 852.4 L412.38 852.39 L416.9 852.38 L421.42 852.37 L425.93 852.35 L430.45 852.34 L434.97 852.33 L439.49 852.32 L444.0 852.3 L448.52 852.29 L453.04 852.28 L457.56 852.26 L462.07 852.25 L466.59 852.24 L471.11 852.22 L475.63 852.21 L480.14 852.19 L484.66 852.18 L489.18 852.16 L493.7 852.14 L498.21 852.13 L502.73 852.11 L507.25 852.09 L511.77 852.07 L516.29 852.06 L520.8 852.04 L525.32 852.02 L529.84 852.0 L534.36 851.98 L538.87 851.96 L543.39 851.94 L547.91 851.91 L552.43 851.89 L556.94 851.87 L561.46 851.85 L565.98 851.82 L570.49 851.8 L575.01 851.77 L579.53 851.75 L584.05 851.72 L588.56 851.69 L593.08 851.67 L597.6 851.64 L602.12 851.61 L606.63 851.58 L611.15 851.55 L615.67 851.52 L620.19 851.49 L624.7 851.46 L629.22 851.43 L633.74 851.39 L638.26 851.36 L642.77 851.32 L647.29 851.29 L651.81 851.25 L656.33 851.21 L660.84 851.17 L665.36 851.14 L669.88 851.1 L674.4 851.05 L678.91 851.01 L683.43 850.97 L687.95 850.92 L692.47 850.88 L696.99 850.83 L701.5 850.79 L706.02 850.74 L710.54 850.69 L715.05 850.64 L719.57 850.59 L724.09 850.53 L728.61 850.48 L733.12 850.42 L737.64 850.37 L742.16 850.31 L746.68 850.25 L751.2 850.19 L755.71 850.13 L760.23 850.06 L764.75 850.0 L769.26 849.93 L773.78 849.86 L778.3 849.79 L782.82 849.72 L787.34 849.65 L791.85 849.57 L796.37 849.5 L800.89 849.42 L805.41 849.34 L809.92 849.26 L814.44 849.17 L818.96 849.09 L823.48 849.0 L827.99 848.91 L832.51 848.82 L837.03 848.73 L841.55 848.63 L846.06 848.53 L850.58 848.43 L855.1 848.33 L859.62 848.22 L864.13 848.12 L868.65 848.01 L873.17 847.9 L877.69 847.78 L882.2 847.66 L886.72 847.54 L891.24 847.42 L895.76 847.29 L900.27 847.17 L904.79 847.03 L909.31 846.9 L913.82 846.76 L918.34 846.62 L922.86 846.48 L927.38 846.33 L931.89 846.18 L936.41 846.03 L940.93 845.87 L945.45 845.71 L949.97 845.55 L954.48 845.38 L959.0 845.21 L963.52 845.03 L968.03 844.85 L972.55 844.67 L977.07 844.48 L981.59 844.29 L986.11 844.1 L990.62 843.9 L995.14 843.69 L999.66 843.48 L1004.18 843.27 L1008.69 843.05 L1013.21 842.83 L1017.73 842.61 L1022.25 842.38 L1026.76 842.14 L1031.28 841.9 L1035.8 841.65 L1040.32 841.4 L1044.83 841.14 L1049.35 840.88 L1053.87 840.62 L1058.39 840.34 L1062.9 840.07 L1067.42 839.78 L1071.94 839.5 L1076.45 839.2 L1080.97 838.9 L1085.49 838.6 L1090.01 838.29 L1094.52 837.97 L1099.04 837.65 L1103.56 837.32 L1108.08 836.98 L1112.6 836.64 L1117.11 836.3 L1121.63 835.95 L1126.15 835.59 L1130.66 835.22 L1135.18 834.85 L1139.7 834.48 L1144.22 834.1 L1148.73 833.71 L1153.25 833.31 L1157.77 832.91 L1162.29 832.51 L1166.81 832.1 L1171.32 831.68 L1175.84 831.26 L1180.36 830.83 L1184.88 830.4 L1189.39 829.96 L1193.91 829.51 L1198.43 829.06 L1202.94 828.61 L1207.46 828.15 L1211.98 827.68 L1216.5 827.21 L1221.02 826.74 L1225.53 826.26 L1230.05 825.78 L1234.57 825.29 L1239.09 824.8 L1243.6 824.3 L1248.12 823.8 L1252.64 823.3 L1257.15 822.8 L1261.67 822.29 L1266.19 821.78 L1270.71 821.26 L1275.23 820.75 L1279.74 820.23 L1284.26 819.7 L1288.78 819.18 L1293.3 818.66 L1297.81 818.13 L1302.33 817.6 L1306.85 817.07 L1311.37 816.54 L1315.88 816.01 L1320.4 815.48 L1324.92 814.95 L1329.43 814.42 L1333.95 813.88 L1338.47 813.35 L1342.99 812.82 L1347.5 812.29 L1352.02 811.76 L1356.54 811.23 L1361.06 810.7 L1365.58 810.18 L1370.09 809.65 L1374.61 809.13 L1379.13 808.61 L1383.64 808.09 L1388.16 807.57 L1392.68 807.06 L1397.2 806.55 L1401.71 806.04 L1406.23 805.53 L1410.75 805.03 L1415.27 804.53 L1419.78 804.03 L1424.3 803.54 L1428.82 803.05 L1433.34 802.56 L1437.86 802.08 L1442.37 801.6 L1446.89 801.12 L1451.41 800.65 L1455.92 800.19 L1460.44 799.73 L1464.96 799.27 L1469.48 798.82 L1474.0 798.37 L1478.51 797.93 L1483.03 797.49 L1487.55 797.06 L1492.06 796.64 L1496.58 796.22 L1501.1 795.8 L1505.62 795.39 L1510.14 794.99 L1514.65 794.59 L1519.17 794.19 L1523.69 793.81 L1528.2 793.43 L1532.72 793.05 L1537.24 792.68 L1541.76 792.32 L1546.27 791.96 L1550.79 791.61 L1555.31 791.26 L1559.83 790.92 L1564.35 790.58 L1568.86 790.25 L1573.38 789.93 L1577.9 789.61 L1582.41 789.3 L1586.93 788.99 L1591.45 788.69 L1595.97 788.39 L1600.48 788.1 L1605.0 787.81 L1609.52 787.53 L1614.04 787.26 L1618.56 786.99 L1623.07 786.72 L1627.59 786.46 L1632.11 786.2 L1636.62 785.95 L1641.14 785.7 L1645.66 785.45 L1650.18 785.21 L1654.69 784.98 L1659.21 784.75 L1663.73 784.52 L1668.25 784.29 L1672.77 784.07 L1677.28 783.85 L1681.8 783.64 L1686.32 783.42 L1690.84 783.22 L1695.35 783.01 L1699.87 782.81 L1704.39 782.61 L1708.9 782.41 L1713.42 782.21 L1717.94 782.02 L1722.46 781.83 L1726.98 781.64 L1731.49 781.45 L1736.01 781.27 L1740.53 781.09 L1745.05 780.9 L1749.56 780.72 L1754.08 780.55 L1758.6 780.37 L1763.11 780.19 L1767.63 780.02 L1772.15 779.84 L1776.67 779.67 L1781.19 779.5 L1785.7 779.33 L1790.22 779.16 L1794.74 778.99 L1799.25 778.82 L1803.77 778.65 L1808.29 778.49 L1812.81 778.32 L1817.33 778.15 L1821.84 777.98 L1826.36 777.81 L1830.88 777.65 L1835.39 777.48 L1839.91 777.31 L1844.43 777.14 L1848.95 776.97 L1853.47 776.8 L1857.98 776.63 L1862.5 776.46" stroke="#00ff00" stroke-width="3" stroke-dasharray="4 5" fill="none"/>
<text x="506" y="497.7" text-anchor="middle" font-size="13" font-weight="bold" fill="#00ff00" >V(out1)</text>
<text x="1409" y="498" text-anchor="middle" font-size="13" font-weight="bold" fill="#0000ff" >V(out2)</text>
</g>
</svg></body></html>
